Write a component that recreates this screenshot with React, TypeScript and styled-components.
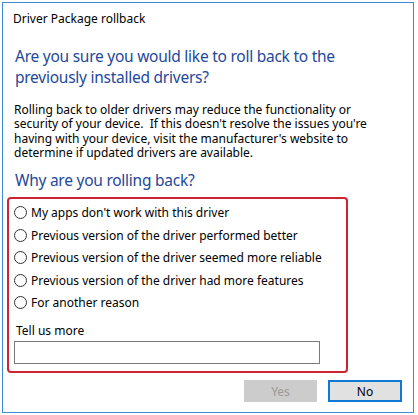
import React from 'react';
import styled, { createGlobalStyle } from "styled-components";

const GlobalStyle = createGlobalStyle`
    html, body {
        margin: 0;
        padding: 0;
        background: #ffffff;
    }
    body {
        font-family: "Noto Sans", "Open Sans", sans-serif;
    }
`;

const REASONS = [
    "My apps don't work with this driver",
    "Previous version of the driver performed better",
    "Previous version of the driver seemed more reliable",
    "Previous version of the driver had more features",
    "For another reason",
];

const App = () => {
    return <>
        <GlobalStyle/>
        <Window>
            <TitleBar>Driver Package rollback</TitleBar>
            <Content>
                <Heading>
                    Are you sure you would like to roll back to the<br/>
                    previously installed drivers?
                </Heading>
                <Body>
                    Rolling back to older drivers may reduce the functionality or<br/>
                    security of your device.&nbsp; If this doesn't resolve the issues you're<br/>
                    having with your device, visit the manufacturer's website to<br/>
                    determine if updated drivers are available.
                </Body>
                <SubHeading>Why are you rolling back?</SubHeading>
                <ReasonBox>
                    {REASONS.map((reason) => (
                        <RadioRow key={reason}>
                            <RadioCircle/>
                            <span>{reason}</span>
                        </RadioRow>
                    ))}
                    <TellLabel>Tell us more</TellLabel>
                    <TextInput type="text"/>
                </ReasonBox>
            </Content>
            <ButtonRow>
                <DialogButton disabled>Yes</DialogButton>
                <DialogButton primary>No</DialogButton>
            </ButtonRow>
        </Window>
    </>
};

export default App;

const Window = styled.div`
    margin: 2px;
    width: 412px;
    height: 411px;
    box-sizing: border-box;
    border: 1px solid #3c8bd6;
    background: #ffffff;
    display: flex;
    flex-direction: column;
    color: #000000;
    font-size: 12px;
`;

const TitleBar = styled.div`
    padding: 8px 0 0 10px;
    height: 24px;
    line-height: 16px;
    font-size: 12px;
    box-sizing: border-box;
`;

const Content = styled.div`
    padding: 0 0 0 4px;
    display: flex;
    flex-direction: column;
`;

const Heading = styled.h1`
    margin: 19px 0 0 8px;
    font-size: 15.5px;
    letter-spacing: -0.25px;
    font-weight: normal;
    line-height: 20.5px;
    color: #24489a;
    white-space: nowrap;
`;

const Body = styled.p`
    margin: 16px 0 0 7px;
    font-size: 12px;
    line-height: 14.4px;
    white-space: nowrap;
`;

const SubHeading = styled.h2`
    margin: 9px 0 0 8px;
    font-size: 15.5px;
    letter-spacing: -0.25px;
    font-weight: normal;
    line-height: 21px;
    color: #24489a;
`;

const ReasonBox = styled.div`
    margin: 6px 0 0 0;
    width: 341px;
    height: 176px;
    box-sizing: border-box;
    border: 2px solid #cc2433;
    border-radius: 4px;
    padding: 3px 0 0 5px;
    display: flex;
    flex-direction: column;
`;

const RadioRow = styled.div`
    display: flex;
    align-items: center;
    gap: 4px;
    height: 22.5px;
    font-size: 12px;
`;

const RadioCircle = styled.span`
    width: 13px;
    height: 13px;
    box-sizing: border-box;
    border: 1px solid #333333;
    border-radius: 50%;
    background: #ffffff;
    flex-shrink: 0;
`;

const TellLabel = styled.div`
    margin: 10px 0 0 2px;
    font-size: 12px;
    line-height: 14px;
`;

const TextInput = styled.input`
    margin: 3px 0 0 0;
    width: 306px;
    height: 23px;
    box-sizing: border-box;
    border: 1px solid #7a7a7a;
    outline: none;
    background: #ffffff;
`;

const ButtonRow = styled.div`
    margin-top: auto;
    display: flex;
    justify-content: flex-end;
    gap: 11px;
    padding: 0 11px 10px 0;
`;

const DialogButton = styled.button<{ primary?: boolean }>`
    width: ${(props) => props.primary ? "74px" : "73px"};
    height: 22px;
    box-sizing: border-box;
    font-family: "Noto Sans", "Open Sans", sans-serif;
    font-size: 12px;
    padding: 0;
    border: ${(props) => props.primary ? "2px solid #0f78d4" : "1px solid #cccccc"};
    background: ${(props) => props.primary ? "#e1e1e1" : "#cccccc"};
    color: ${(props) => props.disabled ? "#9a9a9a" : "#000000"};
`;
